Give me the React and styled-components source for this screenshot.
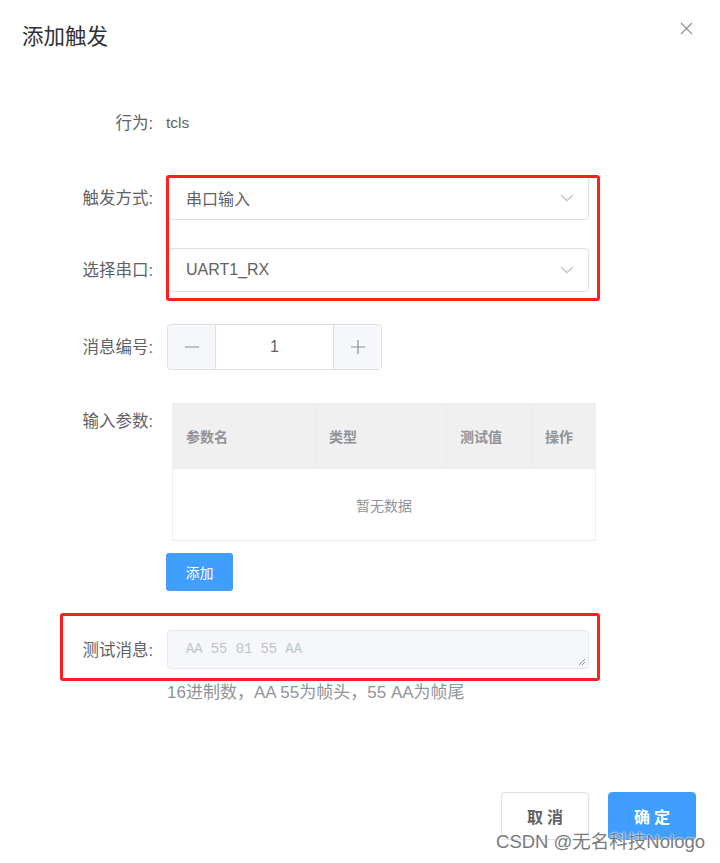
import React from 'react';
import styled, { createGlobalStyle } from 'styled-components';

const GlobalStyle = createGlobalStyle`
  html, body {
    margin: 0;
    padding: 0;
    background: #ffffff;
    font-family: 'Liberation Sans', 'Noto Sans CJK SC', sans-serif;
  }
  * { box-sizing: border-box; }
`;

const Dialog = styled.div`
  position: relative;
  width: 720px;
  height: 863px;
  background: #fff;
  display: flex;
  flex-direction: column;
`;

const Header = styled.div`
  display: flex;
  justify-content: space-between;
  align-items: center;
  padding: 25px 26px 0 22px;
  height: 49px;
`;

const Title = styled.span`
  font-size: 21.5px;
  line-height: 24px;
  color: #303133;
`;

const CloseBtn = styled.button`
  border: none;
  background: none;
  padding: 0;
  width: 14px;
  height: 14px;
  margin-top: -16px;
  cursor: pointer;
  display: flex;
`;

const Form = styled.div`
  display: flex;
  flex-direction: column;
  padding-top: 52px;
`;

const FormItem = styled.div`
  position: relative;
  display: flex;
  align-items: ${p => (p.$top ? 'flex-start' : 'center')};
  margin-top: ${p => p.$mt || 0}px;
  min-height: ${p => p.$h || 44}px;
`;

const Label = styled.label`
  width: 153px;
  flex-shrink: 0;
  text-align: right;
  font-size: 16.5px;
  color: #606266;
  line-height: ${p => p.$lh || 20}px;
`;

const Content = styled.div`
  margin-left: ${p => p.$ml || 14}px;
  width: ${p => p.$w || 421}px;
  font-size: 15.5px;
  color: #606266;
`;

const SelectGroup = styled.div`
  position: relative;
  margin-top: 31px;
  &::after {
    content: '';
    position: absolute;
    top: -1px;
    left: 166px;
    width: 428px;
    height: 120px;
    border: 3px solid #ff1f1f;
    border-radius: 3px;
    pointer-events: none;
  }
`;

const Mark = styled.div`
  position: absolute;
  top: -17px;
  left: 60px;
  width: 540px;
  height: 68px;
  border: 3px solid #ff1f1f;
  border-radius: 3px;
  pointer-events: none;
`;

const SelectBox = styled.div`
  height: 44px;
  border: 1px solid #dcdfe6;
  border-radius: 4px;
  display: flex;
  align-items: center;
  justify-content: space-between;
  padding: 0 14px 0 17px;
  font-size: 16px;
  color: #606266;
  background: #fff;
`;

const NumberBox = styled.div`
  display: flex;
  width: 215px;
  height: 46px;
  border: 1px solid #dcdfe6;
  border-radius: 4px;
  overflow: hidden;
`;

const StepBtn = styled.div`
  width: 48px;
  display: flex;
  align-items: center;
  justify-content: center;
  background: #f5f7fa;
  border-${p => (p.$side === 'left' ? 'right' : 'left')}: 1px solid #dcdfe6;
`;

const NumValue = styled.div`
  flex: 1;
  display: flex;
  align-items: center;
  justify-content: center;
  font-size: 16px;
  color: #606266;
`;

const Table = styled.div`
  width: 424px;
  border: 1px solid #ebeef5;
  margin-left: 5px;
`;

const HeadRow = styled.div`
  display: grid;
  grid-template-columns: 142px 131px 85px 1fr;
  height: 64px;
  background: #f0f0f0;
`;

const HeadCell = styled.div`
  display: flex;
  align-items: center;
  padding-left: 13px;
  font-size: 14px;
  font-weight: bold;
  color: #909399;
  border-left: ${p => (p.$first ? 'none' : '1px solid #e9e9ee')};
`;

const EmptyBody = styled.div`
  height: 72px;
  display: flex;
  align-items: center;
  justify-content: center;
  font-size: 14px;
  color: #909399;
  border-top: 1px solid #ebeef5;
`;

const SmallBtn = styled.button`
  width: 67px;
  height: 38px;
  border: none;
  border-radius: 3px;
  background: #409eff;
  color: #fff;
  font-size: 14px;
  font-family: inherit;
`;

const TextArea = styled.div`
  height: 39px;
  border: 1px solid #e4e7ed;
  border-radius: 4px;
  background: #f5f7fa;
  display: flex;
  align-items: center;
  padding-left: 18px;
  position: relative;
  font-family: 'Liberation Mono', monospace;
  font-size: 13.8px;
  color: #c0c4cc;
`;

const Grip = styled.svg`
  position: absolute;
  right: 2px;
  bottom: 2px;
`;

const Hint = styled.div`
  margin: 14px 0 0 167px;
  font-size: 17px;
  line-height: 20px;
  color: #909399;
`;

const Footer = styled.div`
  margin-top: auto;
  display: flex;
  justify-content: flex-end;
  gap: 19px;
  padding: 0 24px 23px 0;
`;

const FooterBtn = styled.button`
  width: 88px;
  height: 48px;
  border-radius: 4px;
  font-family: inherit;
  font-size: 16px;
  font-weight: bold;
  letter-spacing: 4px;
  text-indent: 4px;
  border: 1px solid ${p => (p.$primary ? '#409eff' : '#dcdfe6')};
  background: ${p => (p.$primary ? '#409eff' : '#fff')};
  color: ${p => (p.$primary ? '#fff' : '#606266')};
`;

const Watermark = styled.div`
  position: absolute;
  right: 15px;
  bottom: 10px;
  font-size: 18.5px;
  color: #7a7a7a;
  text-shadow: 0 0 2px #fff, 0 0 2px #fff;
  pointer-events: none;
`;

const Chevron = () => (
  <svg width="14" height="8" viewBox="0 0 14 8">
    <path d="M1 1 L7 6.5 L13 1" fill="none" stroke="#c0c4cc" strokeWidth="1.3" />
  </svg>
);

const Minus = () => (
  <svg width="16" height="16" viewBox="0 0 16 16">
    <path d="M1 8 H15" stroke="#8a8d93" strokeWidth="1.2" />
  </svg>
);

const Plus = () => (
  <svg width="16" height="16" viewBox="0 0 16 16">
    <path d="M1 8 H15 M8 1 V15" stroke="#8a8d93" strokeWidth="1.2" />
  </svg>
);

export default function App() {
  return (
    <>
      <GlobalStyle />
      <Dialog>
        <Header>
          <Title>添加触发</Title>
          <CloseBtn aria-label="close">
            <svg width="13" height="13" viewBox="0 0 13 13">
              <path d="M1 1 L12 12 M12 1 L1 12" stroke="#909399" strokeWidth="1.3" />
            </svg>
          </CloseBtn>
        </Header>

        <Form>
          <FormItem>
            <Label>行为:</Label>
            <Content $ml={13}>tcls</Content>
          </FormItem>

          <SelectGroup>
            <FormItem>
              <Label>触发方式:</Label>
              <Content $ml={15}>
                <SelectBox>
                  <span>串口输入</span>
                  <Chevron />
                </SelectBox>
              </Content>
            </FormItem>
            <FormItem $mt={28}>
              <Label>选择串口:</Label>
              <Content $ml={15}>
                <SelectBox>
                  <span>UART1_RX</span>
                  <Chevron />
                </SelectBox>
              </Content>
            </FormItem>
          </SelectGroup>

          <FormItem $mt={32} $h={46}>
            <Label>消息编号:</Label>
            <Content $ml={14} $w={215}>
              <NumberBox>
                <StepBtn $side="left"><Minus /></StepBtn>
                <NumValue>1</NumValue>
                <StepBtn $side="right"><Plus /></StepBtn>
              </NumberBox>
            </Content>
          </FormItem>

          <FormItem $mt={33} $top>
            <Label $lh={36}>输入参数:</Label>
            <Content $ml={14} $w={430}>
              <Table>
                <HeadRow>
                  <HeadCell $first>参数名</HeadCell>
                  <HeadCell>类型</HeadCell>
                  <HeadCell>测试值</HeadCell>
                  <HeadCell>操作</HeadCell>
                </HeadRow>
                <EmptyBody>暂无数据</EmptyBody>
              </Table>
            </Content>
          </FormItem>

          <FormItem $mt={12} $h={38}>
            <Content $ml={166} $w={67}>
              <SmallBtn>添加</SmallBtn>
            </Content>
          </FormItem>

          <FormItem $mt={39} $h={39}>
            <Mark />
            <Label>测试消息:</Label>
            <Content $ml={14} $w={422}>
              <TextArea>
                AA 55 01 55 AA
                <Grip width="9" height="9" viewBox="0 0 9 9">
                  <path d="M8 2 L2 8 M8 5 L5 8" stroke="#909399" strokeWidth="1" />
                </Grip>
              </TextArea>
            </Content>
          </FormItem>

          <Hint>16进制数，AA 55为帧头，55 AA为帧尾</Hint>
        </Form>

        <Footer>
          <FooterBtn>取消</FooterBtn>
          <FooterBtn $primary>确定</FooterBtn>
        </Footer>

        <Watermark>CSDN @无名科技Nologo</Watermark>
      </Dialog>
    </>
  );
}
